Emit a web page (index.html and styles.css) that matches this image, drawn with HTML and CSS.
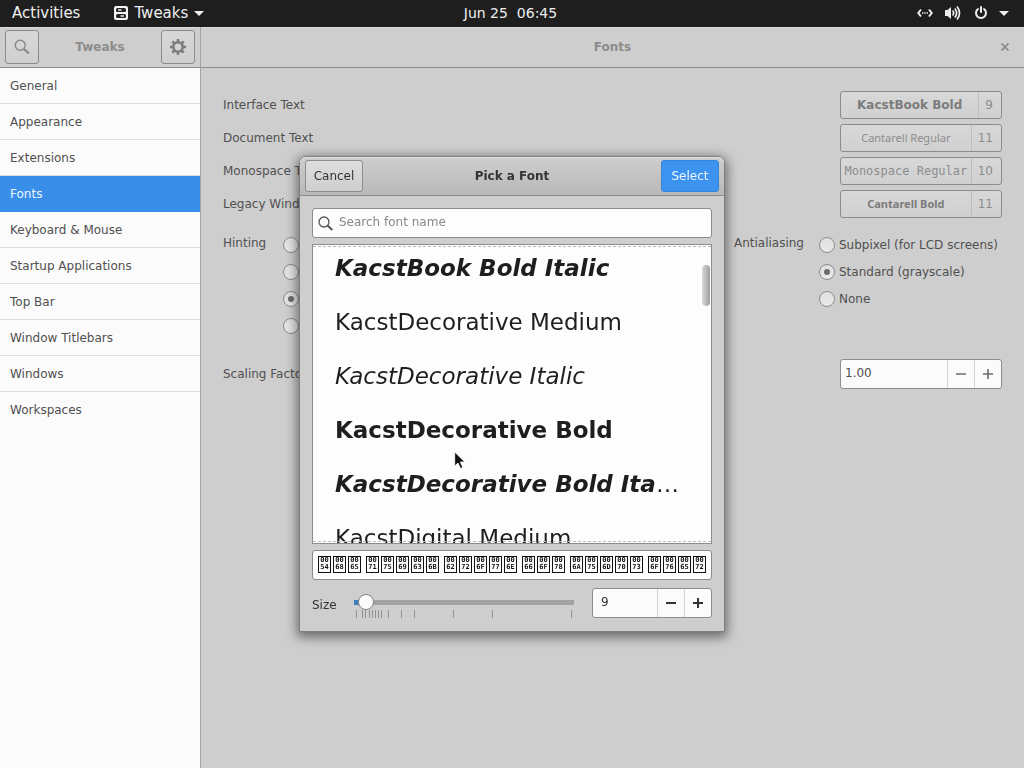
FILE: index.html
```
<!DOCTYPE html>
<html lang="en">
<head>
<meta charset="utf-8">
<meta name="viewport" content="width=device-width, initial-scale=1">
<title>Tweaks</title>
<link rel="stylesheet" href="styles.css">
</head>
<body>
<header class="topbar">
  <nav class="topbar-left">
    <button class="top-item" type="button">Activities</button>
    <button class="top-item" type="button">
      <svg class="app-icon" width="14" height="14" viewBox="0 0 14 14" aria-hidden="true"><rect width="14" height="14" rx="2" fill="#f4f4f4"/><g fill="#222"><rect x="2" y="2" width="10" height="4" rx="1.500"/><rect x="2" y="8" width="10" height="4" rx="1.500"/></g><g fill="#f4f4f4"><rect x="4" y="3.300" width="3.500" height="1.400"/><rect x="6.500" y="9.300" width="3.500" height="1.400"/></g></svg>
      <span>Tweaks</span>
      <svg width="10" height="5" viewBox="0 0 10 5" aria-hidden="true"><path d="M0 0h10L5 5z" fill="#eee"/></svg>
    </button>
  </nav>
  <button class="top-item clock" type="button">Jun 25&nbsp; 06:45</button>
  <button class="top-item tray" type="button" aria-label="System menu">
    <svg width="16" height="16" viewBox="0 0 16 16" fill="none" stroke="#eee" stroke-width="2" aria-hidden="true"><path d="M4 4.500 1.300 8 4 11.500M12 4.500 14.700 8 12 11.500"/><path d="M5 8h1.400M7.300 8h1.400M9.600 8H11" stroke-width="1.400"/></svg>
    <svg width="16" height="16" viewBox="0 0 16 16" fill="none" stroke="#eee" stroke-width="1.700" aria-hidden="true"><path d="M0 5h2.500L6 2v12L2.500 11H0z" fill="#eee" stroke="none"/><path d="M7.600 5.500q2 2.500 0 5M9.800 3.500q3.600 4.500 0 9M12 1.500q5 6.500 0 13"/></svg>
    <svg class="power" width="16" height="16" viewBox="0 0 16 16" fill="none" stroke="#eee" stroke-width="2" stroke-linecap="round" aria-hidden="true"><path d="M5 4a5 5 0 1 0 6 0M8 2v5"/></svg>
    <svg width="10" height="5" viewBox="0 0 10 5" aria-hidden="true"><path d="M0 0h10L5 5z" fill="#eee"/></svg>
  </button>
</header>

<div class="window">
  <aside class="sidebar">
    <header class="headerbar side-header">
      <button class="icon-button" type="button" aria-label="Search"><svg width="16" height="16" viewBox="0 0 16 16" fill="none" stroke="#8c8c8c" aria-hidden="true"><circle cx="6.200" cy="6.200" r="5" stroke-width="1.500"/><path d="m9.800 9.800 5 4.500" stroke-width="2.300"/></svg></button>
      <h1 class="title">Tweaks</h1>
      <button class="icon-button" type="button" aria-label="Settings"><svg width="16" height="16" viewBox="0 0 16 16" fill="none" stroke="#7c7c7c" aria-hidden="true"><circle cx="8" cy="8" r="4.700" stroke-width="2.600"/><path d="M8 0v3M8 13v3M0 8h3M13 8h3M2.300 2.300l2.200 2.200M11.500 11.500l2.200 2.200M13.700 2.300l-2.200 2.200M4.500 11.500l-2.200 2.200" stroke-width="2.500"/></svg></button>
    </header>
    <nav class="side-list">
      <a class="side-item" href="#general">General</a>
      <a class="side-item" href="#appearance">Appearance</a>
      <a class="side-item" href="#extensions">Extensions</a>
      <a class="side-item active" href="#fonts" aria-current="page">Fonts</a>
      <a class="side-item" href="#keyboard">Keyboard &amp; Mouse</a>
      <a class="side-item" href="#startup">Startup Applications</a>
      <a class="side-item" href="#topbar">Top Bar</a>
      <a class="side-item" href="#titlebars">Window Titlebars</a>
      <a class="side-item" href="#windows">Windows</a>
      <a class="side-item" href="#workspaces">Workspaces</a>
    </nav>
  </aside>

  <main class="main">
    <header class="headerbar main-header">
      <h2 class="title">Fonts</h2>
      <button class="close" type="button" aria-label="Close"><svg width="8" height="8" viewBox="0 0 8 8" aria-hidden="true"><path d="m.5.500 7 7M7.500.5.500 7.500" stroke="#8e8e8e" stroke-width="1.800"/></svg></button>
    </header>
    <div class="content">
      <div class="font-rows">
        <div class="row"><span id="l-int">Interface Text</span><button class="font-button" type="button" aria-labelledby="l-int"><span class="font-name bold">KacstBook Bold</span><span class="font-size">9</span></button></div>
        <div class="row"><span id="l-doc">Document Text</span><button class="font-button" type="button" aria-labelledby="l-doc"><span class="font-name cantarell">Cantarell Regular</span><span class="font-size">11</span></button></div>
        <div class="row"><span id="l-mono">Monospace Text</span><button class="font-button" type="button" aria-labelledby="l-mono"><span class="font-name mono">Monospace Regular</span><span class="font-size">10</span></button></div>
        <div class="row"><span id="l-leg">Legacy Window Titles</span><button class="font-button" type="button" aria-labelledby="l-leg"><span class="font-name cantarell bold">Cantarell Bold</span><span class="font-size">11</span></button></div>
      </div>
      <div class="radio-groups">
        <div class="group" role="radiogroup" aria-labelledby="l-hint">
          <span id="l-hint">Hinting</span>
          <div class="options">
            <label class="option"><input class="radio" type="radio" name="hinting">Full</label>
            <label class="option"><input class="radio" type="radio" name="hinting">Medium</label>
            <label class="option"><input class="radio" type="radio" name="hinting" checked>Slight</label>
            <label class="option"><input class="radio" type="radio" name="hinting">None</label>
          </div>
        </div>
        <div class="group group-right" role="radiogroup" aria-labelledby="l-aa">
          <span id="l-aa">Antialiasing</span>
          <div class="options">
            <label class="option"><input class="radio" type="radio" name="aa">Subpixel (for LCD screens)</label>
            <label class="option"><input class="radio" type="radio" name="aa" checked>Standard (grayscale)</label>
            <label class="option"><input class="radio" type="radio" name="aa">None</label>
          </div>
        </div>
      </div>
      <div class="row">
        <label for="scaling">Scaling Factor</label>
        <div class="spin spin-wide">
          <input class="spin-input" id="scaling" type="text" value="1.00">
          <button class="spin-button" type="button" aria-label="Decrease"><svg width="12" height="12" viewBox="0 0 12 12"><path d="M1 6h10" stroke="#6d6d6d" stroke-width="1.600"/></svg></button>
          <button class="spin-button" type="button" aria-label="Increase"><svg width="12" height="12" viewBox="0 0 12 12"><path d="M1 6h10M6 1v10" stroke="#6d6d6d" stroke-width="1.600"/></svg></button>
        </div>
      </div>
    </div>
  </main>
</div>

<div class="overlay">
  <section class="dialog" role="dialog" aria-modal="true" aria-labelledby="dlg-title">
    <header class="dialog-header">
      <button class="button" type="button">Cancel</button>
      <h2 class="dialog-title" id="dlg-title">Pick a Font</h2>
      <button class="button suggested" type="button">Select</button>
    </header>
    <div class="dialog-body">
      <label class="search">
        <svg width="15" height="15" viewBox="0 0 15 15" fill="none" stroke="#555" aria-hidden="true"><circle cx="6" cy="6" r="5" stroke-width="1.300"/><path d="m9.500 9.500 4.800 4.500" stroke-width="2"/></svg>
        <input class="search-input" type="text" placeholder="Search font name" aria-label="Search font name">
      </label>
      <div class="font-list">
        <ul class="fonts">
          <li class="font-item"><span class="bold italic">KacstBook Bold Italic</span></li>
          <li class="font-item">KacstDecorative Medium</li>
          <li class="font-item"><span class="italic">KacstDecorative Italic</span></li>
          <li class="font-item"><span class="bold">KacstDecorative Bold</span></li>
          <li class="font-item"><span class="bold italic">KacstDecorative Bold Italic</span></li>
          <li class="font-item">KacstDigital Medium</li>
        </ul>
        <div class="scrollbar"></div>
      </div>
      <div class="preview" role="textbox" aria-label="Preview">
        <span class="word"><span class="hex">00<br>54</span><span class="hex">00<br>68</span><span class="hex">00<br>65</span></span>
        <span class="word"><span class="hex">00<br>71</span><span class="hex">00<br>75</span><span class="hex">00<br>69</span><span class="hex">00<br>63</span><span class="hex">00<br>6B</span></span>
        <span class="word"><span class="hex">00<br>62</span><span class="hex">00<br>72</span><span class="hex">00<br>6F</span><span class="hex">00<br>77</span><span class="hex">00<br>6E</span></span>
        <span class="word"><span class="hex">00<br>66</span><span class="hex">00<br>6F</span><span class="hex">00<br>78</span></span>
        <span class="word"><span class="hex">00<br>6A</span><span class="hex">00<br>75</span><span class="hex">00<br>6D</span><span class="hex">00<br>70</span><span class="hex">00<br>73</span></span>
        <span class="word"><span class="hex">00<br>6F</span><span class="hex">00<br>76</span><span class="hex">00<br>65</span><span class="hex">00<br>72</span></span>
      </div>
      <div class="size-row">
        <label class="size-label" for="size">Size</label>
        <div class="scale">
          <input class="slider" id="size" type="range" min="6" max="72" value="9">
          <svg class="ticks" width="232" height="8" viewBox="0 0 232 8" aria-hidden="true"><path d="M8.500 0v8M14.500 0v8M17.500 0v8M21.500 0v8M24.500 0v8M27.500 0v8M30.500 0v8M33.500 0v8M40.500 0v8M53.500 0v8M66.500 0v8M105.500 0v8M144.500 0v8M223.500 0v8" stroke="#929292"/></svg>
        </div>
        <div class="spin spin-dark">
          <input class="spin-input" type="text" value="9" aria-label="Font size">
          <button class="spin-button" type="button" aria-label="Decrease"><svg width="12" height="12" viewBox="0 0 12 12"><path d="M1 6h10" stroke="#333" stroke-width="2"/></svg></button>
          <button class="spin-button" type="button" aria-label="Increase"><svg width="12" height="12" viewBox="0 0 12 12"><path d="M1 6h10M6 1v10" stroke="#333" stroke-width="2"/></svg></button>
        </div>
      </div>
    </div>
    <svg class="cursor" width="12" height="19" viewBox="0 0 12 19" aria-hidden="true"><path d="M.7 1v14l3.300-3 2.500 5.500 2.300-1L6.400 11h4.400z" fill="#111" stroke="#fff" stroke-width=".8"/></svg>
  </section>
</div>
</body>
</html>
```
FILE: styles.css
```
* { box-sizing: border-box; }
body {
  margin: 0;
  min-height: 100vh;
  display: flex;
  flex-direction: column;
  background: #cecece;
  color: #505050;
  font: 12px/16px "DejaVu Sans", sans-serif;
}
button, input { font: inherit; color: inherit; margin: 0; }
button { padding: 0; border: 0; background: none; }
svg { display: block; flex: none; }
h1, h2 { margin: 0; font-size: 12px; }
.bold { font-weight: bold; }
.italic { font-style: italic; }

.topbar {
  display: grid;
  grid-template-columns: 1fr auto 1fr;
  align-items: center;
  height: 27px;
  padding: 0 15px 1px 12px;
  background: #1e1e1e;
  color: #eee;
  font-size: 15px;
}
.topbar-left { display: flex; gap: 34px; }
.top-item { display: flex; align-items: center; gap: 6px; }
.clock { font-size: 14px; }
.tray { justify-self: end; gap: 12px; }
.power { margin-right: -2px; }

.window { flex: 1; display: flex; }
.sidebar {
  width: 201px;
  flex: none;
  background: #fbfbfb;
  border-right: 1px solid #a2a2a2;
}
.headerbar {
  display: flex;
  align-items: center;
  height: 41px;
  padding-bottom: 1px;
  border-bottom: 1px solid #8c8c8c;
  background: #cecece;
  box-shadow: inset 0 1px #dadada;
}
.side-header { justify-content: space-between; padding: 0 5px 1px; }
.title { color: #8c8c8c; }
.icon-button {
  display: grid;
  place-items: center;
  width: 34px;
  height: 34px;
  border: 1px solid #8c8c8c;
  border-radius: 3px;
  background: linear-gradient(#d8d8d8, #cfcfcf);
}
.side-list { display: flex; flex-direction: column; }
.side-item {
  height: 36px;
  padding: 10px 10px 9px;
  border-bottom: 1px solid #dedede;
  color: #505050;
  text-decoration: none;
}
.side-item.active { background: #388ee8; border-color: #388ee8; color: #f0f6fd; }
.side-item:last-child { border-bottom: 0; }

.main { flex: 1; min-width: 0; }
.main-header { display: grid; grid-template-columns: 1fr auto 1fr; padding: 0 15px 1px; }
.main-header .title { grid-column: 2; }
.close { justify-self: end; }
.content { padding: 23px 22px; }
.font-rows { display: flex; flex-direction: column; gap: 5px; }
.row { display: flex; align-items: center; justify-content: space-between; }
.font-button {
  display: flex;
  width: 162px;
  height: 28px;
  align-items: center;
  border: 1px solid #8c8c8c;
  border-radius: 3px;
  background: linear-gradient(#d8d8d8, #d0d0d0);
  color: #8c8c8c;
}
.font-name { flex: 1; white-space: nowrap; }
.font-name.bold { color: #7c7c7c; }
.cantarell { font-family: "Noto Sans", sans-serif; font-size: 11px; }
.mono { font-family: "DejaVu Sans Mono", monospace; }
.font-size { padding: 5px 8px 5px 6px; border-left: 1px solid #bebebe; }
.radio-groups { display: flex; justify-content: space-between; padding-top: 17px; margin-bottom: 24px; }
.group { display: flex; gap: 17px; }
.options { display: flex; flex-direction: column; gap: 9px; padding-top: 1px; }
.option { display: flex; align-items: center; gap: 4px; height: 18px; }
.group-right { gap: 15px; padding-right: 4px; }
.radio {
  appearance: none;
  display: grid;
  place-items: center;
  width: 16px;
  height: 16px;
  border: 1px solid #8c8c8c;
  border-radius: 50%;
  background: linear-gradient(#e0e0e0, #e8e8e8);
}
.radio:checked::before { content: ""; width: 6px; height: 6px; border-radius: 50%; background: #6c6c6c; }

.spin {
  display: flex;
  width: 120px;
  height: 30px;
  border: 1px solid #8c8c8c;
  border-radius: 3px;
  background: #fbfbfb;
  overflow: hidden;
}
.spin-wide { width: 162px; }
.spin-dark { color: #333; }
.spin-input { flex: 1; min-width: 0; padding: 0 4px 2px; border: 0; background: none; outline: 0; }
.spin-dark .spin-input { padding-left: 8px; }
.spin-button { display: grid; place-items: center; width: 27px; border-left: 1px solid #d4d4d4; }

.overlay {
  position: fixed;
  inset: 20px 0 0;
  display: grid;
  place-items: center;
}
.dialog {
  position: relative;
  width: 426px;
  border: 1px solid #7d7d7d;
  border-radius: 7px 7px 0 0;
  background: #cecece;
  box-shadow: 0 3px 12px 2px rgba(0, 0, 0, .5);
  color: #333;
}
.dialog-header {
  display: flex;
  align-items: center;
  justify-content: space-between;
  height: 39px;
  padding: 0 5px 1px;
  border-bottom: 1px solid #8c8c8c;
  border-radius: 6px 6px 0 0;
  background: linear-gradient(#cecece, #b8b8b8);
  box-shadow: inset 0 1px #e0e0e0;
}
.button {
  width: 58px;
  height: 32px;
  border: 1px solid #8c8c8c;
  border-radius: 3px;
  background: linear-gradient(#dedede, #cecece);
}
.suggested { border-color: #3585d8; background: #3c94f0; color: #f0f6fd; }
.dialog-body { padding: 12px 12px 13px; }
.search {
  display: flex;
  align-items: center;
  gap: 6px;
  height: 30px;
  padding: 0 5px;
  border: 1px solid #8c8c8c;
  border-radius: 3px;
  background: #fdfdfd;
}
.search-input { flex: 1; min-width: 0; padding: 0 0 2px; border: 0; background: none; outline: 0; }
.search-input::placeholder { color: #888; opacity: 1; }
.font-list {
  position: relative;
  height: 300px;
  margin: 6px 0;
  overflow: hidden;
  border: 1px solid #8c8c8c;
  background: #fdfdfd;
}
.font-list::before, .font-list::after {
  content: "";
  position: absolute;
  inset: 1px 0 auto;
  border-top: 1px dashed #bbb;
}
.font-list::after { inset: auto 0 1px; }
.fonts { margin: -4px 0 0; padding: 0 28px 0 22px; list-style: none; }
.font-item {
  height: 54px;
  overflow: hidden;
  color: #1e1e1e;
  font-size: 23px;
  line-height: 54px;
  text-overflow: ellipsis;
  white-space: nowrap;
}
.scrollbar {
  position: absolute;
  top: 20px;
  right: 1px;
  width: 8px;
  height: 41px;
  border-radius: 4px;
  background: linear-gradient(90deg, #dadada, #9e9e9e);
}
.preview {
  display: flex;
  gap: 5px;
  align-items: center;
  height: 30px;
  padding: 0 5px 1px;
  overflow: hidden;
  border: 1px solid #8c8c8c;
  border-radius: 3px;
  background: #fdfdfd;
}
.word { display: flex; gap: 2px; }
.hex {
  width: 13px;
  height: 17px;
  border: 1px solid #111;
  color: #111;
  font: bold 7px/7px "DejaVu Sans Mono", monospace;
  text-align: center;
}
.size-row { display: flex; align-items: center; justify-content: space-between; margin-top: 8px; }
.size-label { padding-top: 3px; }
.scale { display: flex; flex-direction: column; width: 232px; padding-top: 6px; }
.slider {
  appearance: none;
  width: 232px;
  height: 16px;
  background: linear-gradient(90deg, #3d7fc0 12px, #a2a2a2 12px) center / 220px 5px no-repeat;
}
.slider::-webkit-slider-thumb {
  appearance: none;
  width: 16px;
  height: 16px;
  border: 1px solid #858585;
  border-radius: 50%;
  background: #fbfbfb;
}
.cursor { position: absolute; left: 154px; top: 294px; }
```
